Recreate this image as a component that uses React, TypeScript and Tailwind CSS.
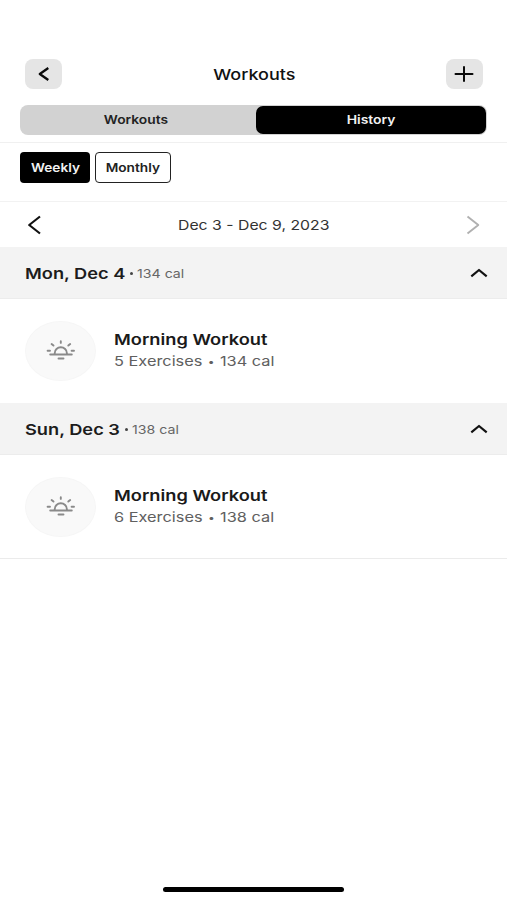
import React from 'react';
import clsx from 'clsx';

const days = [
    { label: 'Mon, Dec 4', calories: '134 cal', exercises: '5 Exercises', gap: 'w-[113px]' },
    { label: 'Sun, Dec 3', calories: '138 cal', exercises: '6 Exercises', gap: 'w-[108px]' },
];

function SunriseIcon() {
    return (
        <svg width="30" height="22" viewBox="0 0 30 22" fill="none" stroke="#8a8a8a" strokeWidth="1.9" strokeLinecap="round">
            <path d="M4.2 14.5H25.8M12.5 18.5H17.5M8.7 14.2V13.2A6.1 5.9 0 0 1 20.9 13.2V14.2" />
            <path d="M14.8 1.2V2.9M5.6 4L7.5 5.6M24.2 4L22.3 5.6M1.6 10.7H4M28 10.7H25.6" />
        </svg>
    );
}

function ChevronUp() {
    return (
        <svg width="18" height="10" viewBox="0 0 18 10" fill="none" stroke="#111" strokeWidth="2.2" strokeLinejoin="round">
            <path d="M1.3 8.3L9 2L16.7 8.3" />
        </svg>
    );
}

function Header() {
    return (
        <header className="flex h-[30px] items-center justify-between pl-[25px] pr-6">
            <button className="flex h-[30px] w-[37px] items-center justify-center rounded-lg bg-[#e5e5e5]">
                <svg width="12" height="14" viewBox="0 0 12 14" fill="none" stroke="#0a0a0a" strokeWidth="2.3" strokeLinejoin="round">
                    <path d="M10.3 1L1.8 7L10.3 13" />
                </svg>
            </button>
            <h1 className="scale-x-[1.2] pt-[2px] text-[15px] font-medium text-[#111]">Workouts</h1>
            <button className="flex h-[30px] w-[37px] items-center justify-center rounded-lg bg-[#e5e5e5]">
                <svg width="20" height="16" viewBox="0 0 20 16" fill="none" stroke="#0a0a0a" strokeWidth="2" strokeLinecap="round">
                    <path d="M1.5 8H18.5M10 1V15" />
                </svg>
            </button>
        </header>
    );
}

function DaySection({ day }: { day: (typeof days)[number] }) {
    return (
        <section>
            <div className="flex h-[52px] items-center justify-between border-b border-[#ececec] bg-[#f3f3f3] pl-[25px] pr-[19px]">
                <div className="flex items-center pt-px whitespace-nowrap">
                    <div className={clsx('shrink-0 pt-[2px]', day.gap)}>
                        <h2 className="w-max origin-left scale-x-[1.215] text-[15px] font-semibold text-[#1c1c1c]">{day.label}</h2>
                    </div>
                    <span className="-ml-[8px] mr-1 h-[3px] w-[3px] rounded-full bg-[#444]" />
                    <span className="origin-left scale-x-[1.18] pt-px text-xs text-[#666]">{day.calories}</span>
                </div>
                <ChevronUp />
            </div>
            <div className="flex h-[104px] items-center pl-[25px]">
                <div className="flex h-[60px] w-[71px] items-center justify-center rounded-[50%] border border-[#f6f6f6] bg-[#f9f9f9]">
                    <SunriseIcon />
                </div>
                <div className="ml-[18px] pb-px whitespace-nowrap">
                    <h3 className="w-max origin-left scale-x-[1.215] text-[15px] leading-[22px] font-semibold text-[#1a1a1a]">Morning Workout</h3>
                    <p className="flex w-max origin-left scale-x-[1.21] items-center text-[13.5px] leading-[21px] text-[#606060]">
                        <span>{day.exercises}</span>
                        <span className="w-[14.5px] text-center text-[10px]">•</span>
                        <span>{day.calories}</span>
                    </p>
                </div>
            </div>
        </section>
    );
}

export default function App() {
    return (
        <div className="flex h-[900px] w-[507px] flex-col overflow-hidden bg-white pt-[59px] font-['Inter',sans-serif]">
            <Header />

            <div className="border-b border-[#f0f0f0] px-5 pt-4 pb-[7px]">
                <div className="flex h-[30px] rounded-lg bg-[#d2d2d2] p-px text-xs font-semibold">
                    <button className="flex flex-1 items-center justify-center pr-[5px] text-[#222]">
                        <span className="scale-x-[1.15]">Workouts</span>
                    </button>
                    <button className="flex h-7 w-[230px] items-center justify-center rounded-[7px] bg-black text-[#f2f2f2]">
                        <span className="scale-x-[1.16]">History</span>
                    </button>
                </div>
            </div>

            <div className="flex h-[59px] gap-[5px] border-b border-[#f2f2f2] px-5 pt-[9px] text-xs font-semibold">
                <button className="flex h-[31px] w-[70px] items-center justify-center rounded bg-black text-[#f2f2f2]">
                    <span className="scale-x-[1.14]">Weekly</span>
                </button>
                <button className="flex h-[31px] w-[76px] items-center justify-center rounded border border-[#222] text-[#222]">
                    <span className="scale-x-[1.14]">Monthly</span>
                </button>
            </div>

            <div className="flex h-[45px] items-center justify-between px-[27px]">
                <svg width="14" height="20" viewBox="0 0 14 20" fill="none" stroke="#111" strokeWidth="2.2" strokeLinejoin="round">
                    <path d="M13 1.5L2.2 10L13 18.5" />
                </svg>
                <span className="scale-x-[1.17] pt-[2px] text-[13.5px] text-[#333]">Dec 3 - Dec 9, 2023</span>
                <svg width="14" height="20" viewBox="0 0 14 20" fill="none" stroke="#b0b0b0" strokeWidth="1.9" strokeLinejoin="round">
                    <path d="M1.5 1.5L12.3 10L1.5 18.5" />
                </svg>
            </div>

            <div className="-mb-px h-[312px] border-b border-[#ebebeb]">
                {days.map(day => (
                    <DaySection key={day.label} day={day} />
                ))}
            </div>

            <div className="mx-auto mt-auto mb-2 h-[5px] w-[181px] rounded-full bg-black" />
        </div>
    );
}
